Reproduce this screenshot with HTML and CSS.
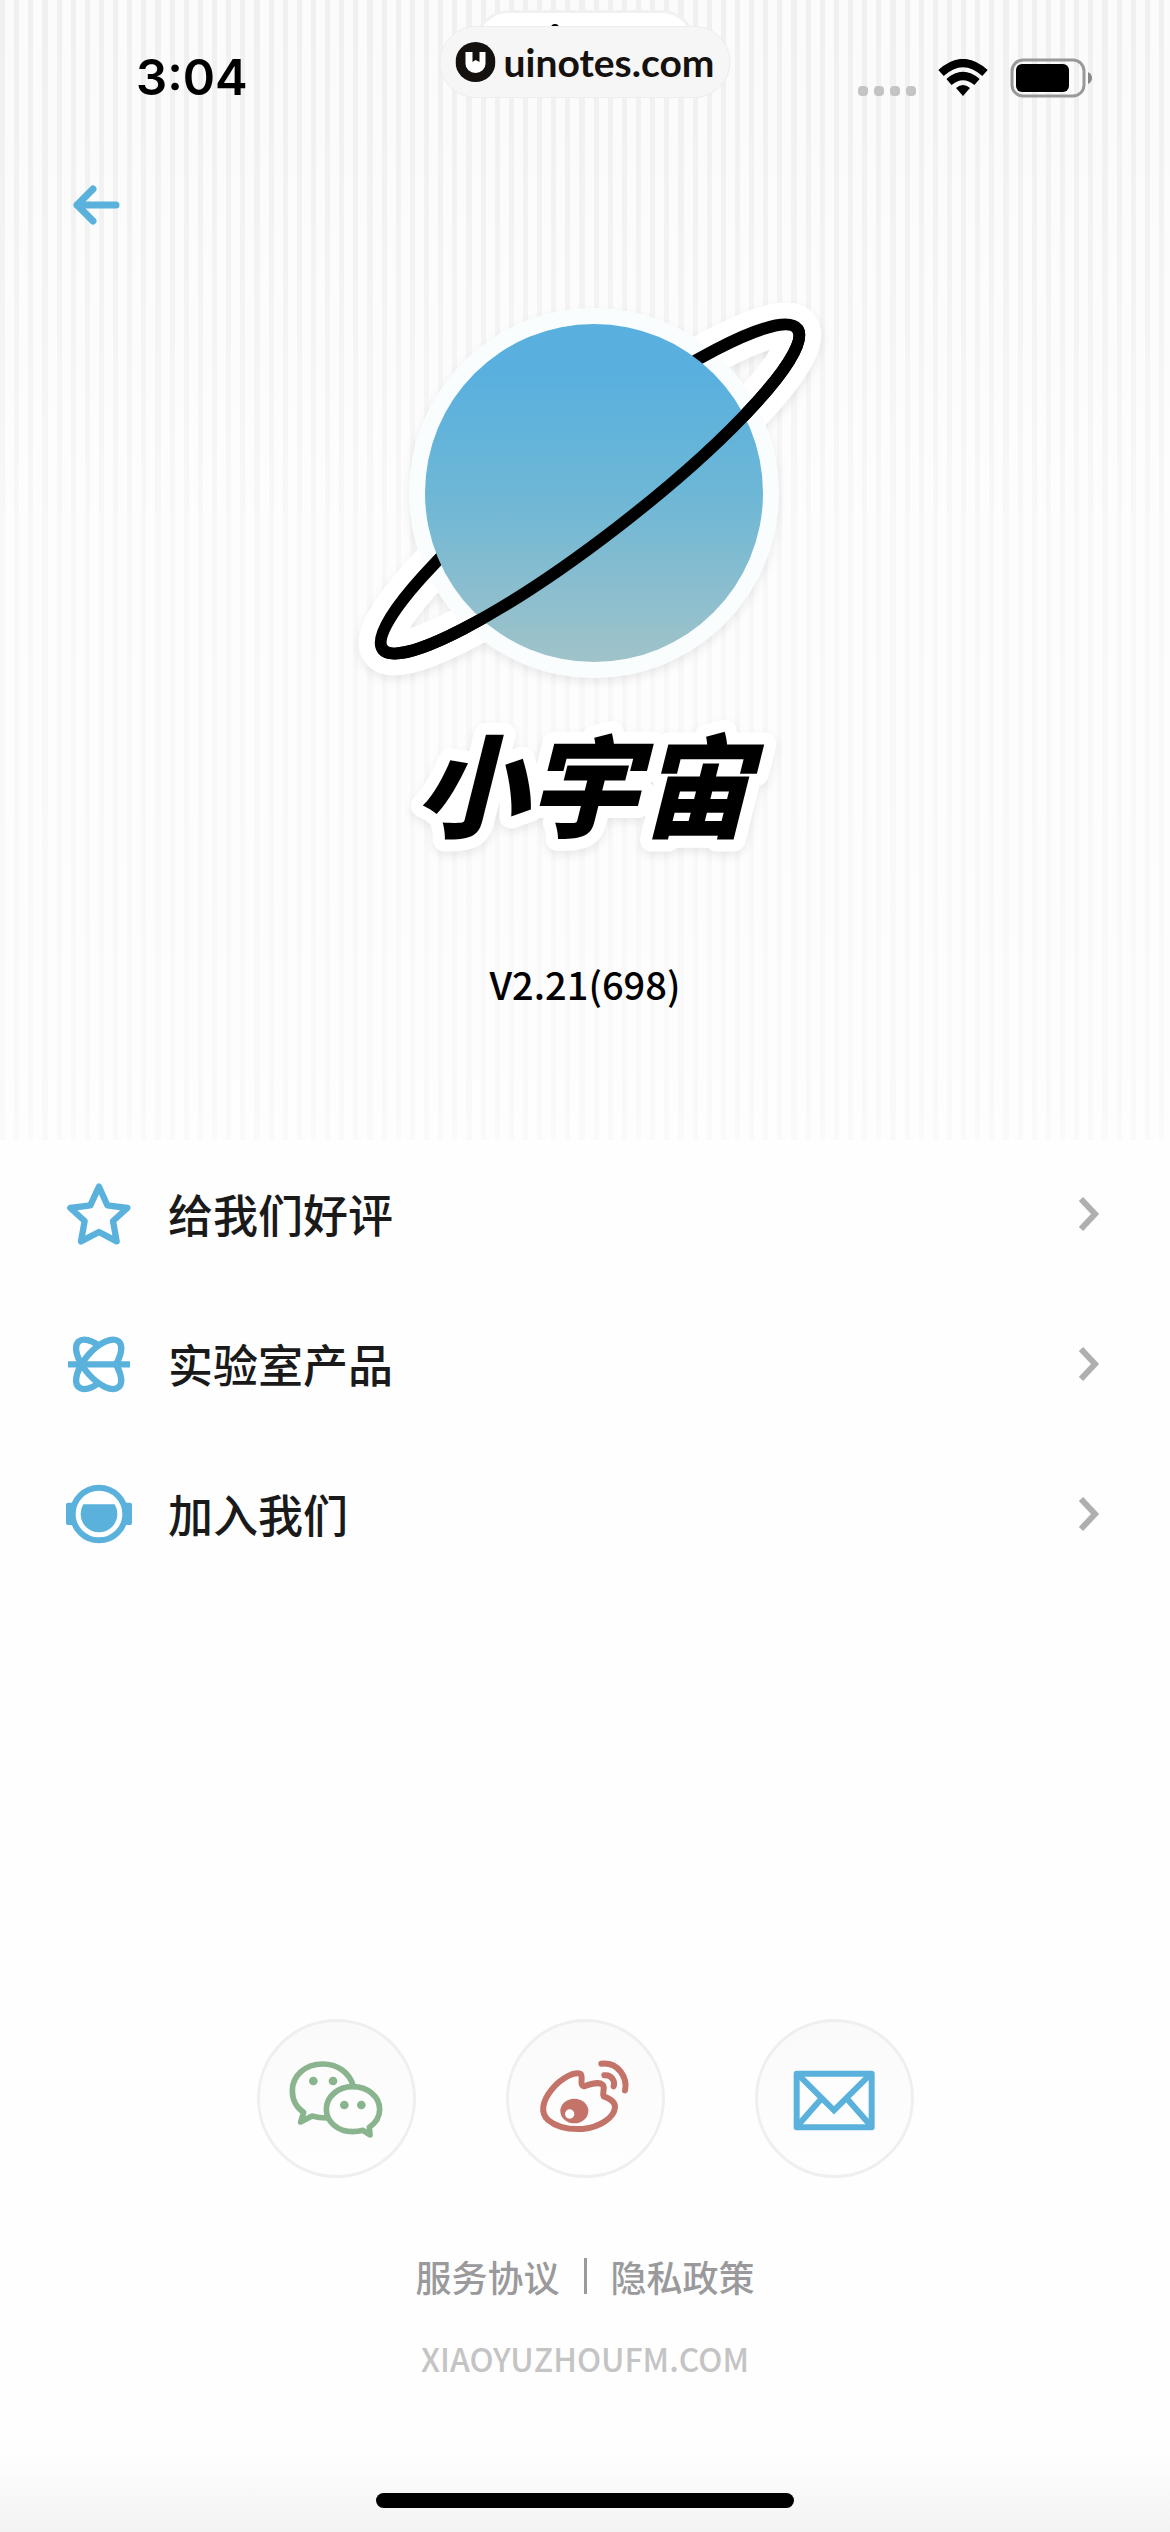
FILE: index.html
```html
<!DOCTYPE html>
<html lang="zh-CN">
<head>
  <meta charset="UTF-8">
  <meta name="viewport" content="width=device-width, initial-scale=1.0">
  <title>小宇宙</title>
  <link rel="stylesheet" href="styles.css">
</head>
<body>

  <!-- Hero -->
  <header class="hero">
    <div class="island">
      <span class="island-speck"></span>
    </div>
    <a class="badge" href="#">
      <svg class="badge-logo" viewBox="0 0 40 40" aria-hidden="true">
        <circle cx="20" cy="20" r="20" fill="#15110f"/>
        <path d="M10 10H17V20L20 18L24 20V10H30V22A10 9 0 0 1 10 22Z" fill="#fff"/>
      </svg>
      <span>uinotes.com</span>
    </a>

    <div class="status-bar">
      <span class="time">3:04</span>
      <div class="status-icons">
        <div class="signal"><i></i><i></i><i></i><i></i></div>
        <svg class="wifi" viewBox="0 0 50 38" aria-hidden="true">
          <path d="M3 14Q25 -6 47 14" fill="none" stroke="#000" stroke-width="8"/>
          <path d="M11 23Q25 11 39 23" fill="none" stroke="#000" stroke-width="8"/>
          <path d="M18 29Q25 23 32 29L25 37Z"/>
        </svg>
        <svg class="battery" viewBox="0 0 84 40" aria-hidden="true">
          <rect x="2" y="2" width="72" height="36" rx="11" fill="none" stroke="#999" stroke-width="3"/>
          <rect x="6" y="6" width="53" height="28" rx="6"/>
          <path d="M78 14Q82 16 82 20T78 26Z" fill="#888"/>
        </svg>
      </div>
    </div>

    <nav class="nav">
      <button class="back" type="button" aria-label="返回">
        <svg viewBox="0 0 48 40" fill="none" stroke="#5ab1dc" stroke-width="7" stroke-linecap="round" stroke-linejoin="round">
          <path d="M21 4L5 20L21 36M5 20H44"/>
        </svg>
      </button>
    </nav>

    <svg class="planet" viewBox="335 290 500 400" aria-hidden="true">
      <defs>
        <linearGradient id="sky" x1="0" y1="0" x2="0" y2="1">
          <stop offset="0.15" stop-color="#59b0de"/>
          <stop offset="0.5" stop-color="#6db7d6"/>
          <stop offset="1" stop-color="#a0c3c9"/>
        </linearGradient>
      </defs>
      <g class="sticker">
        <ellipse cx="590" cy="489" rx="262" ry="47" transform="rotate(-37.7 590 489)" fill="none" stroke="#fff" stroke-width="44"/>
        <circle cx="594" cy="493" r="185" fill="#fafdfe"/>
      </g>
      <g fill="none" stroke="#000" stroke-width="12">
        <ellipse cx="590" cy="489" rx="262" ry="47" transform="rotate(-37.7 590 489)"/>
        <circle cx="594" cy="493" r="169" fill="url(#sky)" stroke="none"/>
        <path d="M262 0A262 47 0 0 1 -262 0" transform="translate(590 489) rotate(-37.7)"/>
      </g>
    </svg>

    <h1 class="title">
      <svg class="title-art" viewBox="0 0 420 160">
        <text class="title-text" x="208" y="121" text-anchor="middle">小宇宙</text>
      </svg>
    </h1>
    <p class="version">V2.21(698)</p>
  </header>

  <!-- Menu -->
  <main class="menu">
    <a class="row" href="#">
      <svg class="row-icon" viewBox="72 202 210 210" fill="none" stroke="#5ab1dc" stroke-width="19" stroke-linejoin="round">
        <path d="M177 225L202 281L262 289L219 328L230 389L177 361L123 389L134 328L91 289L151 281Z"/>
      </svg>
      <span class="row-label">给我们好评</span>
      <svg class="chevron" viewBox="0 0 24 36"><path d="M3 3L17 18L3 33"/></svg>
    </a>
    <a class="row" href="#">
      <svg class="row-icon" viewBox="72 660 210 210" stroke="#5ab1dc" stroke-width="19" fill="#fff">
        <defs>
          <clipPath id="upper"><rect x="72" y="660" width="210" height="105"/></clipPath>
          <clipPath id="lower"><rect x="72" y="765" width="210" height="105"/></clipPath>
        </defs>
        <g clip-path="url(#upper)">
          <ellipse cx="176" cy="766" rx="91" ry="42" transform="rotate(49 176 766)"/>
          <ellipse cx="176" cy="766" rx="91" ry="42" transform="rotate(-49 176 766)"/>
        </g>
        <g clip-path="url(#lower)">
          <ellipse cx="176" cy="766" rx="91" ry="42" transform="rotate(-49 176 766)"/>
          <ellipse cx="176" cy="766" rx="91" ry="42" transform="rotate(49 176 766)"/>
        </g>
        <path d="M84 766H270"/>
      </svg>
      <span class="row-label">实验室产品</span>
      <svg class="chevron" viewBox="0 0 24 36"><path d="M3 3L17 18L3 33"/></svg>
    </a>
    <a class="row" href="#">
      <svg class="row-icon" viewBox="72 1111 210 210" fill="#5ab1dc">
        <rect x="78" y="1182" width="198" height="67" rx="6"/>
        <circle cx="177" cy="1216" r="79" fill="#fff" stroke="#5ab1dc" stroke-width="18"/>
        <path d="M130 1187H224Q232 1200 232 1216A55 55 0 0 1 122 1216Q122 1200 130 1187Z"/>
      </svg>
      <span class="row-label">加入我们</span>
      <svg class="chevron" viewBox="0 0 24 36"><path d="M3 3L17 18L3 33"/></svg>
    </a>
  </main>

  <!-- Footer -->
  <footer class="footer">
    <div class="socials">
      <a class="social" href="#" aria-label="微信">
        <svg viewBox="140 145 300 300" fill="none" stroke="#89b48e" stroke-width="17" stroke-linejoin="round">
          <path d="M342 257C331 215 293 190 250 190C198 190 159 225 159 270C159 298 171 320 193 335L184 364L218 346Q238 352 264 352"/>
          <path d="M371 389Q356 393 340 393C295 393 261 363 261 326C261 288 296 258 340 258C385 258 421 288 421 326C421 348 409 367 390 380L392 403Z" fill="#fdfdfd"/>
          <g fill="#89b48e" stroke="none">
            <circle cx="222" cy="241" r="13"/>
            <circle cx="281" cy="241" r="13"/>
            <circle cx="315" cy="313" r="13"/>
            <circle cx="366" cy="313" r="13"/>
          </g>
        </svg>
      </a>
      <a class="social" href="#" aria-label="微博">
        <svg viewBox="887 145 300 300" fill="none" stroke="#c37368" stroke-width="18" stroke-linecap="round" stroke-linejoin="round">
          <path d="M1024 220C1006 212 965 232 937 267C908 303 903 337 926 358C952 380 990 387 1030 385C1082 380 1125 350 1127 320C1128 301 1110 293 1093 287C1087 278 1099 263 1090 252C1077 241 1050 252 1034 257C1018 254 1033 231 1024 220Z" fill="#fdfdfd"/>
          <ellipse cx="1005" cy="331" rx="42" ry="37" fill="#c37368" stroke="none"/>
          <circle cx="991" cy="340" r="14" fill="#fff" stroke="none"/>
          <path d="M1086 189Q1123 185 1144 213Q1164 240 1157 269"/>
          <path d="M1095 224Q1111 222 1120 235Q1127 246 1123 257"/>
        </svg>
      </a>
      <a class="social" href="#" aria-label="邮箱">
        <svg viewBox="373 145 300 300" fill="none" stroke="#5ab1dc" stroke-width="18" stroke-linejoin="round">
          <rect x="411" y="219" width="225" height="161" fill="#fdfdfd"/>
          <path d="M415 221L523 329L632 221M485 294L413 376M562 294L634 376" stroke-linejoin="miter"/>
        </svg>
      </a>
    </div>
    <div class="links">
      <a href="#">服务协议</a>
      <span class="divider"></span>
      <a href="#">隐私政策</a>
    </div>
    <a class="site" href="#">XIAOYUZHOUFM.COM</a>
    <div class="home-indicator"></div>
  </footer>

</body>
</html>
```
FILE: styles.css
```css
/* General Reset */
* {
  margin: 0;
  padding: 0;
  box-sizing: border-box;
}

body {
  display: flex;
  flex-direction: column;
  min-height: 100vh;
  font-family: 'Noto Sans CJK SC', sans-serif;
  background-color: #fefefe;
  color: #1a1a1b;
}

a {
  color: inherit;
  text-decoration: none;
}

svg {
  display: block;
}

/* Hero */
.hero {
  position: relative;
  display: flex;
  flex-direction: column;
  align-items: center;
  padding-bottom: 126px;
  background:
    linear-gradient(rgba(255, 255, 255, 0) 0%, rgba(255, 255, 255, 0.15) 18%, rgba(255, 255, 255, 0.5) 45%, rgba(255, 255, 255, 0.64) 100%),
    repeating-linear-gradient(to right, #f0f0f0 0%, #f0f0f0 0.44%, #fbfbfb 0.44%, #fbfbfb 1.208%);
}

.island {
  position: absolute;
  top: 10px;
  left: 50%;
  width: 222px;
  height: 70px;
  border: 3px solid #f1f1f1;
  border-radius: 35px;
  background-color: #fff;
  transform: translateX(-50%);
}

.island-speck {
  position: absolute;
  top: 11px;
  left: 74px;
  width: 8px;
  height: 8px;
  border-radius: 4px;
  background-color: #000;
}

.badge {
  position: absolute;
  top: 26px;
  left: 50%;
  display: flex;
  align-items: center;
  gap: 8px;
  height: 72px;
  padding: 0 15px;
  border: 1px solid #ededed;
  border-radius: 36px;
  background-color: #f6f6f6;
  color: #15110f;
  font: bold 39px/60px Lato, sans-serif;
  transform: translateX(-50%);
}

.badge-logo {
  width: 40px;
  height: 40px;
}

/* Status Bar */
.status-bar {
  display: flex;
  justify-content: space-between;
  align-items: center;
  width: 100%;
  height: 156px;
  padding: 0 76px 0 136px;
}

.time {
  color: #000;
  font: 600 49px/60px Inter, sans-serif;
}

.status-icons {
  display: flex;
  align-items: center;
  gap: 22px;
}

.signal {
  display: flex;
  align-self: flex-end;
  gap: 6px;
  padding-bottom: 2px;
}

.signal i {
  width: 10px;
  height: 10px;
  border-radius: 4px;
  background-color: #c4c4c4;
}

.wifi {
  width: 50px;
  height: 38px;
}

.battery {
  width: 84px;
  height: 40px;
}

/* Navigation */
.nav {
  display: flex;
  align-items: center;
  width: 100%;
  height: 98px;
  padding: 0 72px;
}

.back {
  border: none;
  background: none;
  cursor: pointer;
}

.back svg {
  width: 48px;
  height: 40px;
}

/* Logo */
.planet {
  width: 500px;
  height: 400px;
  margin-top: 36px;
}

.sticker {
  filter: drop-shadow(0 4px 5px rgba(0, 0, 0, 0.08));
}

.title {
  margin-top: 18px;
}

.title-art {
  width: 420px;
  height: 160px;
  overflow: visible;
}

.title-text {
  fill: #000;
  font-size: 112px;
  font-style: italic;
  font-weight: 900;
  stroke: #fff;
  stroke-width: 24px;
  stroke-linejoin: round;
  paint-order: stroke;
  filter: drop-shadow(0 4px 5px rgba(0, 0, 0, 0.08));
}

.version {
  margin-top: 86px;
  color: #000;
  font-size: 38px;
  font-weight: 500;
  line-height: 60px;
}

/* Menu */
.row {
  display: flex;
  align-items: center;
  height: 150px;
  padding: 0 68px 2px 64px;
}

.row-icon {
  width: 70px;
  height: 70px;
}

.row-label {
  flex: 1;
  margin-left: 34px;
  font-size: 45px;
  font-weight: 500;
  line-height: 60px;
}

.chevron {
  width: 24px;
  height: 36px;
  fill: none;
  stroke: #afafb0;
  stroke-width: 6;
}

/* Footer */
.footer {
  display: flex;
  flex-direction: column;
  align-items: center;
  margin-top: auto;
  padding-bottom: 24px;
  background: linear-gradient(to top, #f3f3f3 0, #fefefe 80px);
}

.socials {
  display: flex;
  gap: 90px;
}

.social {
  display: flex;
  justify-content: center;
  align-items: center;
  width: 159px;
  height: 159px;
  border: 3px solid #efefef;
  border-radius: 50%;
  background: linear-gradient(#fafafa, #fefefe);
}

.social svg {
  width: 100px;
  height: 100px;
}

.links {
  display: flex;
  align-items: center;
  gap: 24px;
  margin-top: 68px;
  color: #9a9a9c;
  font-size: 36px;
  font-weight: 500;
  line-height: 60px;
}

.divider {
  width: 3px;
  height: 36px;
  background-color: #9a9a9c;
}

.site {
  margin-top: 22px;
  color: #c4c4c4;
  font-size: 32px;
  font-weight: 500;
  line-height: 60px;
}

.home-indicator {
  width: 418px;
  height: 15px;
  margin-top: 105px;
  border-radius: 8px;
  background-color: #000;
}
```
